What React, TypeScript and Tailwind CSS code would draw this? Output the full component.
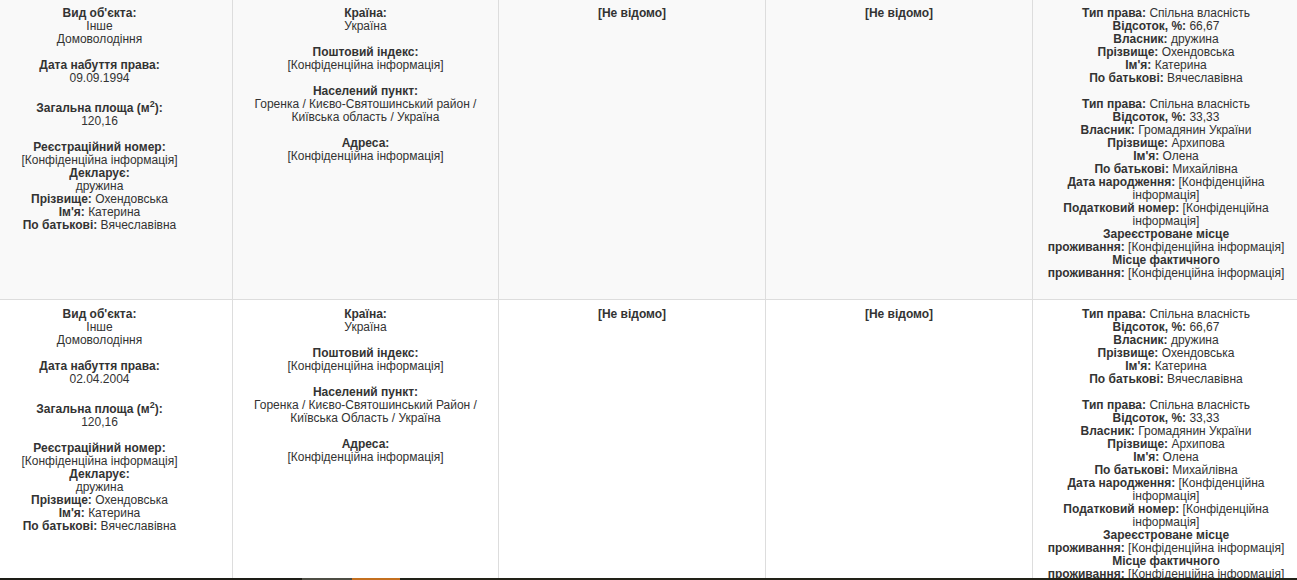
import type { ReactNode } from 'react'

type Row = {
  date: string
  locality: string
  bg: string
}

const CONF = '[Конфіденційна інформація]'
const NB = '\u00a0'

const rows: Row[] = [
  {
    date: '09.09.1994',
    locality: 'Горенка / Києво-Святошинський район / Київська область / Україна',
    bg: 'bg-[#f9f9f9]',
  },
  {
    date: '02.04.2004',
    locality: 'Горенка / Києво-Святошинський Район / Київська Область / Україна',
    bg: 'bg-white',
  },
]

function L({ children }: { children: ReactNode }) {
  return <b className="font-bold text-[#333]">{children}</b>
}

function Cell({ bg, children }: { bg: string; children: ReactNode }) {
  return (
    <div className={`${bg} border-r border-b border-[#ddd] px-2 pt-[8px] pb-[6px] text-center`}>
      {children}
    </div>
  )
}

function ObjectInfo({ date }: { date: string }) {
  return (
    <>
      <L>Вид об'єкта:</L>
      <br />
      Інше
      <br />
      Домоволодіння
      <br />
      <br />
      <L>Дата набуття права:</L>
      <br />
      {date}
      <br />
      <br />
      <L>
        Загальна площа (м
        <sup className="static align-super text-[9px] leading-[13px]">2</sup>
        ):
      </L>
      <br />
      120,16
      <br />
      <br />
      <L>Реєстраційний номер:</L>
      <br />
      {CONF}
      <br />
      <L>Декларує:</L>
      <br />
      дружина
      <br />
      <L>Прізвище:</L> Охендовська
      <br />
      <L>Ім'я:</L> Катерина
      <br />
      <L>По батькові:</L> Вячеславівна
    </>
  )
}

function Address({ locality }: { locality: string }) {
  return (
    <>
      <L>Країна:</L>
      <br />
      Україна
      <br />
      <br />
      <L>Поштовий індекс:</L>
      <br />
      {CONF}
      <br />
      <br />
      <L>Населений пункт:</L>
      <br />
      {locality}
      <br />
      <br />
      <L>Адреса:</L>
      <br />
      {CONF}
    </>
  )
}

// label and value are glued with a no-break space, like the source page
function Field({ label, value }: { label: string; value: string }) {
  return (
    <>
      <L>{label}</L>
      {NB}
      {value}
      <br />
    </>
  )
}

function Owners() {
  return (
    <>
      <Field label="Тип права:" value="Спільна власність" />
      <Field label="Відсоток, %:" value="66,67" />
      <Field label="Власник:" value="дружина" />
      <Field label="Прізвище:" value="Охендовська" />
      <Field label="Ім'я:" value="Катерина" />
      <Field label="По батькові:" value="Вячеславівна" />
      <br />
      <Field label="Тип права:" value="Спільна власність" />
      <Field label="Відсоток, %:" value="33,33" />
      <Field label="Власник:" value="Громадянин України" />
      <Field label="Прізвище:" value="Архипова" />
      <Field label="Ім'я:" value="Олена" />
      <Field label="По батькові:" value="Михайлівна" />
      <Field label="Дата народження:" value={CONF} />
      <Field label="Податковий номер:" value={CONF} />
      <Field label="Зареєстроване місце проживання:" value={CONF} />
      <Field label="Місце фактичного проживання:" value={CONF} />
      <br />
    </>
  )
}

export default function App() {
  return (
    <div className="relative h-[580px] w-full overflow-hidden bg-white font-['Liberation_Sans',Arial,sans-serif] text-[12px] leading-[13px] text-[#333]">
      <div className="-mt-px -ml-[33px] grid w-max grid-cols-[266px_266px_267px_267px_267px]">
        {rows.map(row => (
          <div key={row.date} className="contents">
            <Cell bg={row.bg}>
              <ObjectInfo date={row.date} />
            </Cell>
            <Cell bg={row.bg}>
              <Address locality={row.locality} />
            </Cell>
            <Cell bg={row.bg}>
              <L>[Не відомо]</L>
            </Cell>
            <Cell bg={row.bg}>
              <L>[Не відомо]</L>
            </Cell>
            <Cell bg={row.bg}>
              <Owners />
            </Cell>
          </div>
        ))}
      </div>

      {/* edge of the page footer peeking in */}
      <div className="absolute bottom-0 left-0 flex h-[2px] w-full">
        <div className="w-[302px] bg-[#1d1d16]" />
        <div className="w-[50px] bg-[#4d4d44]" />
        <div className="w-[48px] bg-[#c4701f]" />
        <div className="flex-1 bg-[#222218]" />
      </div>
    </div>
  )
}
